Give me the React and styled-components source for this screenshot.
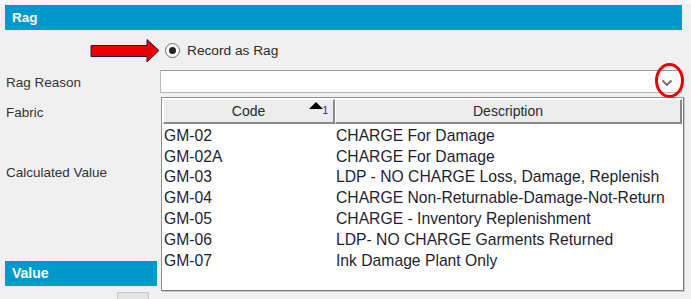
import React from "react";
import styled, { createGlobalStyle } from "styled-components";

const rows = [
  { code: "GM-02", desc: "CHARGE For Damage" },
  { code: "GM-02A", desc: "CHARGE For Damage" },
  { code: "GM-03", desc: "LDP - NO CHARGE Loss, Damage, Replenish" },
  { code: "GM-04", desc: "CHARGE Non-Returnable-Damage-Not-Return" },
  { code: "GM-05", desc: "CHARGE - Inventory Replenishment" },
  { code: "GM-06", desc: "LDP- NO CHARGE Garments Returned" },
  { code: "GM-07", desc: "Ink Damage Plant Only" },
];

export default function App() {
  return (
    <>
      <GlobalStyle />
      <Page>
        <SectionBar>Rag</SectionBar>
        <Form>
          <span />
          <RadioRow>
            <RedArrow width="72" height="26" viewBox="0 0 72 26">
              <path
                d="M1 7.5 H57 V1.5 L69 12.5 L57 24 V18.5 H1 Z"
                fill="#ee0000"
                stroke="#1c1c4a"
                strokeWidth="1"
              />
            </RedArrow>
            <Radio />
            <RadioText>Record as Rag</RadioText>
          </RadioRow>

          <Label $center>Rag Reason</Label>
          <Combo>
            <Chevron width="12" height="8" viewBox="0 0 12 8">
              <path d="M1.5 1.5 L6 6 L10.5 1.5" fill="none" stroke="#6a6a6a" strokeWidth="1.8" />
            </Chevron>
            <RedCircle />
          </Combo>

          <LeftLabels>
            <Label>Fabric</Label>
            <Label $top={44}>Calculated Value</Label>
            <ValueBar>Value</ValueBar>
            <CutButton />
          </LeftLabels>
          <Grid>
            <HeadRow>
              <HeadCell $w={172}>
                Code
                <SortMark>
                  <svg width="14" height="8" viewBox="0 0 14 8">
                    <path d="M0 7 L7 0 L14 7 Z" fill="#000" />
                  </svg>
                  <SortNum>1</SortNum>
                </SortMark>
              </HeadCell>
              <HeadCell>Description</HeadCell>
            </HeadRow>
            <Body>
              {rows.map((r) => (
                <Row key={r.code}>
                  <CodeCell>{r.code}</CodeCell>
                  <DescCell>{r.desc}</DescCell>
                </Row>
              ))}
            </Body>
          </Grid>
        </Form>
      </Page>
    </>
  );
}

/*===================== Styles =====================*/
const GlobalStyle = createGlobalStyle`
  html, body {
    margin: 0;
    padding: 0;
    background: #f0f0f0;
    overflow: hidden;
  }
  body {
    font-family: "Liberation Sans", Arial, sans-serif;
  }
`;

const Page = styled.div`
  width: 677px;
  height: 299px;
  padding: 5px 9px 0 5px;
  border-top: 1px solid #e2e2e2;
  box-shadow: inset 0 4px 0 #f8f8f8;
  position: relative;
  top: -1px;
`;

const SectionBar = styled.div`
  height: 25px;
  line-height: 25px;
  background: #0099c9;
  color: #fff;
  font-weight: bold;
  font-size: 13.5px;
  padding-left: 7px;
`;

const Form = styled.div`
  display: grid;
  grid-template-columns: 155px 1fr;
  grid-template-rows: auto auto auto;
  margin-top: 8px;
`;

const RadioRow = styled.div`
  position: relative;
  display: flex;
  align-items: center;
  gap: 7px;
  padding-left: 5px;
  height: 24px;
  margin-bottom: 8px;
`;

const RedArrow = styled.svg`
  position: absolute;
  left: -70px;
  top: 0px;
`;

const Radio = styled.span`
  width: 15px;
  height: 15px;
  box-sizing: border-box;
  border-radius: 50%;
  border: 1.5px solid #6b6b6b;
  background: #fff;
  display: flex;
  align-items: center;
  justify-content: center;
  &::after {
    content: "";
    width: 7px;
    height: 7px;
    border-radius: 50%;
    background: #222;
  }
`;

const RadioText = styled.span`
  font-size: 13.7px;
  color: #2a2a2a;
`;

const Label = styled.div`
  font-size: 13.5px;
  color: #333;
  line-height: 16px;
  margin-top: ${(p) => p.$top || 0}px;
  padding-left: 1px;
  padding-top: ${(p) => (p.$center ? 2 : 0)}px;
  align-self: ${(p) => (p.$center ? "center" : "flex-start")};
`;

const Combo = styled.div`
  position: relative;
  height: 23px;
  box-sizing: border-box;
  width: 522px;
  background: #fff;
  border: 1px solid #b9b9b9;
  border-top-color: #9a9a9a;
`;

const Chevron = styled.svg`
  position: absolute;
  right: 8px;
  top: 8px;
`;

const RedCircle = styled.div`
  position: absolute;
  left: 494px;
  top: -8px;
  width: 23px;
  height: 29px;
  border: 3px solid #e60000;
  border-radius: 50%;
`;

const LeftLabels = styled.div`
  display: flex;
  flex-direction: column;
  align-items: flex-start;
  padding-top: 8px;
  margin-top: 4px;
`;

const ValueBar = styled.div`
  width: 145px;
  height: 25px;
  line-height: 25px;
  margin-top: 80px;
  padding-left: 7px;
  background: #0099c9;
  color: #fff;
  font-weight: bold;
  font-size: 14px;
`;

const CutButton = styled.div`
  margin: 6px 0 0 112px;
  width: 30px;
  height: 12px;
  background: #e4e4e4;
  border: 1px solid #c8c8c8;
`;

const Grid = styled.div`
  margin-top: 4px;
  margin-left: 1px;
  width: 523px;
  height: 194px;
  box-sizing: border-box;
  border: 1px solid #8e8e8e;
  border-right-color: #7a7a7a;
  border-bottom-color: #7a7a7a;
  box-shadow: 1px 1px 0 #c8c8c8;
  background: #fff;
  padding: 1px;
  overflow: hidden;
  font-family: "Liberation Sans", Arial, sans-serif;
`;

const HeadRow = styled.div`
  display: flex;
  height: 25px;
`;

const HeadCell = styled.div`
  position: relative;
  box-sizing: border-box;
  flex: ${(p) => (p.$w ? `0 0 ${p.$w}px` : "1")};
  display: flex;
  align-items: center;
  justify-content: center;
  background: #ececec;
  border-top: 1px solid #fff;
  border-left: 1px solid #fff;
  border-right: 2px solid #8a8a8a;
  border-bottom: 2px solid #8a8a8a;
  font-size: 14px;
  color: #2a2a2a;
`;

const SortMark = styled.span`
  position: absolute;
  right: 5px;
  top: 2px;
  display: flex;
  align-items: flex-start;
`;

const SortNum = styled.span`
  font-size: 10px;
  color: #1a1a8a;
  margin-top: 3px;
  margin-left: -1px;
`;

const Body = styled.div`
  display: flex;
  flex-direction: column;
  padding-top: 1.5px;
`;

const Row = styled.div`
  display: flex;
  height: 20.8px;
  align-items: center;
  font-size: 15.7px;
  color: #1e1e32;
`;

const CodeCell = styled.div`
  flex: 0 0 172px;
  padding-left: 1px;
`;

const DescCell = styled.div`
  flex: 1;
`;
